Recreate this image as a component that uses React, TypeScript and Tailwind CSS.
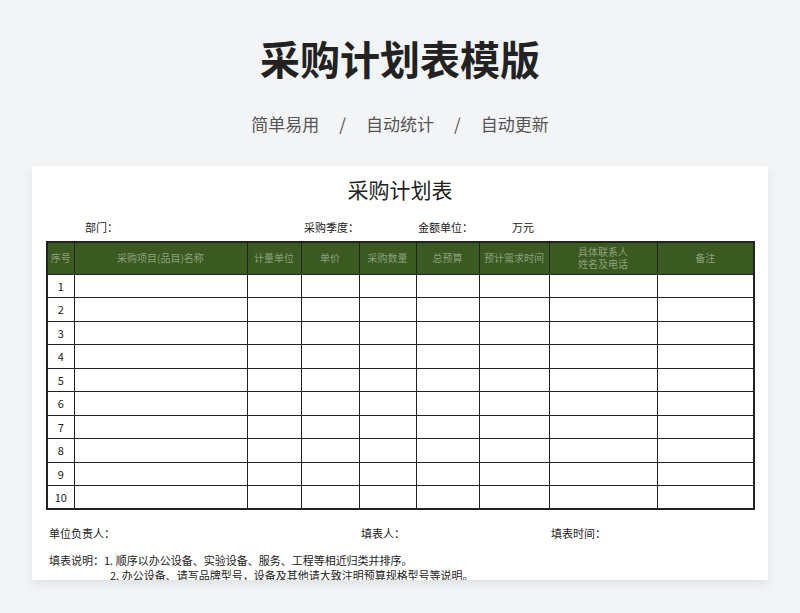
export default function App() {
  const cols = [27, 173, 54, 58, 57, 63, 70, 108, 97];
  const heads = ["序号", "采购项目(品目)名称", "计量单位", "单价", "采购数量", "总预算", "预计需求时间", "具体联系人\n姓名及电话", "备注"];
  return (
    <div className="w-[800px] h-[613px] bg-[#f3f4f6] flex flex-col items-center overflow-hidden" style={{ fontFamily: '"Noto Sans CJK SC", sans-serif' }}>
      <h1 className="mt-[34px] text-[40px] leading-[48px] font-bold text-[#222]">采购计划表模版</h1>
      <div className="mt-[30px] text-[17px] text-[#555] flex gap-[20px] leading-[24px]">
        <span>简单易用</span><span>/</span><span>自动统计</span><span>/</span><span>自动更新</span>
      </div>
      <div className="mt-[30px] w-[736px] h-[414px] self-start ml-[32px] bg-white shadow-[0_4px_10px_rgba(0,0,0,0.08)] overflow-hidden text-[#222]">
        <div className="text-center text-[21px] mt-[9px] leading-[28px]">采购计划表</div>
        <div className="flex text-[11px] mt-[16px] h-[16px] leading-[16px]">
          <span className="ml-[53px] w-[219px]">部门：</span>
          <span className="w-[114px]">采购季度：</span>
          <span className="w-[94px]">金额单位：</span>
          <span>万元</span>
        </div>
        <table className="ml-[14px] mt-[6px] border-collapse border-2 border-[#222] table-fixed" style={{ width: 707 }}>
          <colgroup>{cols.map((w, i) => <col key={i} style={{ width: w }} />)}</colgroup>
          <thead>
            <tr className="h-[32px] bg-[#3b5a22]">
              {heads.map((h, i) => (
                <th key={i} className="border border-[#222] text-[10px] font-normal text-[#8ea07c] leading-[12px] whitespace-pre-line p-0">{h}</th>
              ))}
            </tr>
          </thead>
          <tbody>
            {Array.from({ length: 10 }, (_, r) => (
              <tr key={r} className="h-[23.5px]">
                {cols.map((_, i) => (
                  <td key={i} className="border border-[#222] text-[11px] text-center p-0">{i === 0 ? r + 1 : ""}</td>
                ))}
              </tr>
            ))}
          </tbody>
        </table>
        <div className="flex text-[11px] mt-[15px] leading-[16px]">
          <span className="ml-[17px] w-[312px]">单位负责人：</span>
          <span className="w-[190px]">填表人：</span>
          <span>填表时间：</span>
        </div>
        <div className="text-[11px] ml-[17px] mt-[12px] leading-[15px]">填表说明：1. 顺序以办公设备、实验设备、服务、工程等相近归类并排序。</div>
        <div className="text-[11px] ml-[78px] leading-[15px]">2. 办公设备、请写品牌型号，设备及其他请大致注明预算规格型号等说明。</div>
      </div>
    </div>
  );
}
